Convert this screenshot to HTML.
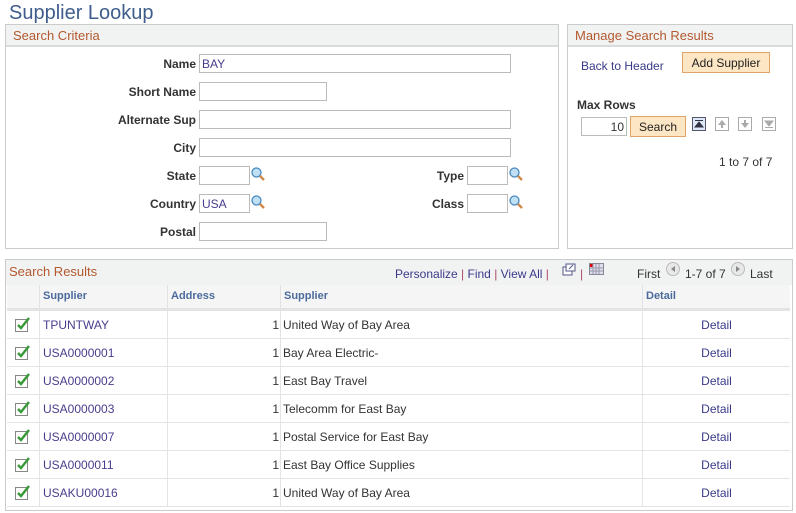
<!DOCTYPE html>
<html><head><meta charset="utf-8"><style>
*{box-sizing:border-box;margin:0;padding:0}
body{width:796px;height:513px;background:#fff;font-family:"Liberation Sans",Arial,sans-serif;font-size:12px;color:#333;position:relative;overflow:hidden}
.a{position:absolute}
.box{position:absolute;border:1px solid #cbcbcb}
.hd{position:absolute;left:0;right:0;top:0;height:22px;background:#f1f3f3;border-bottom:2px solid #d9dcdc;color:#b4582f;font-size:13px;padding:3px 0 0 7px}
.lb{position:absolute;font-weight:bold;text-align:right;color:#333;font-size:12px}
.in{position:absolute;height:19px;border:1px solid #bbb;background:#fff;font-size:12px;padding:2px 2px;color:#4a3c8c}
.lk{color:#3a3a8a}
.btn{position:absolute;background:#fde6c3;border:1px solid #e0a46a;font-size:12px;text-align:center;color:#222}
.mg{position:absolute;width:14px;height:14px}
.ic{position:absolute;width:14px;height:14px;border:1px solid #aaa;background:#fff}
.th{position:absolute;top:285px;height:26px;background:#f5f5f5;border-right:1px solid #e2e2e2;border-bottom:3px solid #e3e3e3;color:#4b6a9c;font-weight:bold;font-size:11px;padding:5px 3px}
.row{position:absolute;left:7px;width:783px;height:28px;border-bottom:1px solid #e4e4e4}
.c{position:absolute;top:0;height:27px;border-right:1px solid #e4e4e4;padding-top:7px}
</style></head><body>
<div class="a" style="left:9px;top:2px;font-size:20px;color:#3f5d8c">Supplier Lookup</div>

<div class="box" style="left:5px;top:24px;width:554px;height:225px"><div class="hd">Search Criteria</div></div>
<div class="lb" style="left:60px;width:136px;top:57px">Name</div><div class="in" style="left:199px;top:54px;width:312px">BAY</div>
<div class="lb" style="left:60px;width:136px;top:85px">Short Name</div><div class="in" style="left:199px;top:82px;width:128px"></div>
<div class="lb" style="left:60px;width:136px;top:113px">Alternate Sup</div><div class="in" style="left:199px;top:110px;width:312px"></div>
<div class="lb" style="left:60px;width:136px;top:141px">City</div><div class="in" style="left:199px;top:138px;width:312px"></div>
<div class="lb" style="left:60px;width:136px;top:169px">State</div><div class="in" style="left:199px;top:166px;width:51px"></div>
<div class="lb" style="left:60px;width:136px;top:197px">Country</div><div class="in" style="left:199px;top:194px;width:51px">USA</div>
<div class="lb" style="left:60px;width:136px;top:225px">Postal</div><div class="in" style="left:199px;top:222px;width:128px"></div>
<div class="lb" style="left:380px;width:84px;top:169px">Type</div><div class="in" style="left:467px;top:166px;width:41px"></div>
<div class="lb" style="left:380px;width:84px;top:197px">Class</div><div class="in" style="left:467px;top:194px;width:41px"></div>
<svg class="mg" style="left:251px;top:167px" viewBox="0 0 14 14"><circle cx="5.5" cy="5.5" r="4.5" fill="#bfe0f5" stroke="#4a89bf" stroke-width="1.3"/><path d="M9 9l4 4" stroke="#d08a4a" stroke-width="2.5"/></svg>
<svg class="mg" style="left:251px;top:195px" viewBox="0 0 14 14"><circle cx="5.5" cy="5.5" r="4.5" fill="#bfe0f5" stroke="#4a89bf" stroke-width="1.3"/><path d="M9 9l4 4" stroke="#d08a4a" stroke-width="2.5"/></svg>
<svg class="mg" style="left:509px;top:167px" viewBox="0 0 14 14"><circle cx="5.5" cy="5.5" r="4.5" fill="#bfe0f5" stroke="#4a89bf" stroke-width="1.3"/><path d="M9 9l4 4" stroke="#d08a4a" stroke-width="2.5"/></svg>
<svg class="mg" style="left:509px;top:195px" viewBox="0 0 14 14"><circle cx="5.5" cy="5.5" r="4.5" fill="#bfe0f5" stroke="#4a89bf" stroke-width="1.3"/><path d="M9 9l4 4" stroke="#d08a4a" stroke-width="2.5"/></svg>

<div class="box" style="left:567px;top:24px;width:226px;height:225px"><div class="hd">Manage Search Results</div></div>
<div class="a lk" style="left:581px;top:59px">Back to Header</div>
<div class="btn" style="left:682px;top:52px;width:88px;height:21px;padding-top:3px">Add Supplier</div>
<div class="lb" style="left:577px;top:98px">Max Rows</div>
<div class="in" style="left:581px;top:117px;width:46px;text-align:right;color:#333">10</div>
<div class="btn" style="left:630px;top:116px;width:56px;height:21px;padding-top:3px">Search</div>
<svg class="a" style="left:692px;top:117px" width="14" height="14" viewBox="0 0 14 14"><rect x=".5" y=".5" width="13" height="13" fill="#dde8f8" stroke="#556"/><path d="M3 3.5h8M3 10l4-5 4 5z" stroke="#334" fill="#334"/></svg>
<svg class="a" style="left:715px;top:117px" width="14" height="14" viewBox="0 0 14 14"><rect x=".5" y=".5" width="13" height="13" fill="#fff" stroke="#aaa"/><path d="M3 8l4-5 4 5zM6 8h2v3H6z" fill="#aaa"/></svg>
<svg class="a" style="left:738px;top:117px" width="14" height="14" viewBox="0 0 14 14"><rect x=".5" y=".5" width="13" height="13" fill="#fff" stroke="#aaa"/><path d="M3 6l4 5 4-5zM6 6h2V3H6z" fill="#aaa"/></svg>
<svg class="a" style="left:762px;top:117px" width="14" height="14" viewBox="0 0 14 14"><rect x=".5" y=".5" width="13" height="13" fill="#fff" stroke="#aaa"/><path d="M3 4l4 5 4-5zM3 10.5h8" stroke="#aaa" fill="#aaa"/></svg>
<div class="a" style="left:719px;top:155px">1 to 7 of 7</div>

<div class="box" style="left:5px;top:259px;width:788px;height:252px"></div>
<div class="a" style="left:6px;top:260px;width:786px;height:25px;background:#f1f3f3"></div>
<div class="a" style="left:9px;top:264px;font-size:13px;color:#b4582f">Search Results</div>
<div class="a" style="left:395px;top:267px;color:#3a3a8a">Personalize <span style="color:#b04a6a">|</span> Find <span style="color:#b04a6a">|</span> View All <span style="color:#b04a6a">|</span></div>
<svg class="a" style="left:562px;top:263px" width="14" height="13" viewBox="0 0 14 13"><rect x="1" y="4" width="9" height="8" fill="#fff" stroke="#558"/><rect x="4" y="1" width="9" height="7" fill="#fff" stroke="#558"/><path d="M7 6l4-4" stroke="#558"/></svg>
<div class="a" style="left:580px;top:267px;color:#b04a6a">|</div>
<svg class="a" style="left:589px;top:263px" width="15" height="12" viewBox="0 0 15 12"><rect x=".5" y=".5" width="14" height="11" fill="#dde" stroke="#889"/><rect x="1" y="1" width="3" height="3" fill="#d00"/><path d="M1 5h13M1 8h13M4 1v10M7 1v10M10 1v10" stroke="#99a"/></svg>
<div class="a" style="left:637px;top:267px">First</div>
<svg class="a" style="left:666px;top:262px" width="14" height="14"><circle cx="7" cy="7" r="6.5" fill="#e8e8e8" stroke="#bbb"/><path d="M9 4L5 7l4 3z" fill="#888"/></svg>
<div class="a" style="left:685px;top:267px">1-7 of 7</div>
<svg class="a" style="left:731px;top:262px" width="14" height="14"><circle cx="7" cy="7" r="6.5" fill="#e8e8e8" stroke="#bbb"/><path d="M5 4l4 3-4 3z" fill="#888"/></svg>
<div class="a" style="left:750px;top:267px">Last</div>

<div class="th" style="left:7px;width:33px"></div>
<div class="th" style="left:40px;width:128px">Supplier</div>
<div class="th" style="left:168px;width:113px">Address</div>
<div class="th" style="left:281px;width:362px">Supplier</div>
<div class="th" style="left:643px;width:147px;border-right:none">Detail</div>

<div id="rows"></div>
<script></script>
<div class="row" style="top:311px"><div class="c" style="left:0;width:33px"><svg style="margin-left:8px;margin-top:-1px" width="16" height="15"><rect x=".5" y="2.5" width="12" height="12" fill="#fff" stroke="#888"/><path d="M3 8l3 3 8-10" stroke="#3a9a3a" stroke-width="2.5" fill="none"/></svg></div><div class="c" style="left:33px;width:128px;padding-left:3px;color:#4a3c8c">TPUNTWAY</div><div class="c" style="left:161px;width:113px;text-align:right;padding-right:1px">1</div><div class="c" style="left:274px;width:362px;padding-left:2px">United Way of Bay Area</div><div class="c" style="left:636px;width:147px;border:none;text-align:center;color:#3a3a8a">Detail</div></div>
<div class="row" style="top:339px"><div class="c" style="left:0;width:33px"><svg style="margin-left:8px;margin-top:-1px" width="16" height="15"><rect x=".5" y="2.5" width="12" height="12" fill="#fff" stroke="#888"/><path d="M3 8l3 3 8-10" stroke="#3a9a3a" stroke-width="2.5" fill="none"/></svg></div><div class="c" style="left:33px;width:128px;padding-left:3px;color:#4a3c8c">USA0000001</div><div class="c" style="left:161px;width:113px;text-align:right;padding-right:1px">1</div><div class="c" style="left:274px;width:362px;padding-left:2px">Bay Area Electric-</div><div class="c" style="left:636px;width:147px;border:none;text-align:center;color:#3a3a8a">Detail</div></div>
<div class="row" style="top:367px"><div class="c" style="left:0;width:33px"><svg style="margin-left:8px;margin-top:-1px" width="16" height="15"><rect x=".5" y="2.5" width="12" height="12" fill="#fff" stroke="#888"/><path d="M3 8l3 3 8-10" stroke="#3a9a3a" stroke-width="2.5" fill="none"/></svg></div><div class="c" style="left:33px;width:128px;padding-left:3px;color:#4a3c8c">USA0000002</div><div class="c" style="left:161px;width:113px;text-align:right;padding-right:1px">1</div><div class="c" style="left:274px;width:362px;padding-left:2px">East Bay Travel</div><div class="c" style="left:636px;width:147px;border:none;text-align:center;color:#3a3a8a">Detail</div></div>
<div class="row" style="top:395px"><div class="c" style="left:0;width:33px"><svg style="margin-left:8px;margin-top:-1px" width="16" height="15"><rect x=".5" y="2.5" width="12" height="12" fill="#fff" stroke="#888"/><path d="M3 8l3 3 8-10" stroke="#3a9a3a" stroke-width="2.5" fill="none"/></svg></div><div class="c" style="left:33px;width:128px;padding-left:3px;color:#4a3c8c">USA0000003</div><div class="c" style="left:161px;width:113px;text-align:right;padding-right:1px">1</div><div class="c" style="left:274px;width:362px;padding-left:2px">Telecomm for East Bay</div><div class="c" style="left:636px;width:147px;border:none;text-align:center;color:#3a3a8a">Detail</div></div>
<div class="row" style="top:423px"><div class="c" style="left:0;width:33px"><svg style="margin-left:8px;margin-top:-1px" width="16" height="15"><rect x=".5" y="2.5" width="12" height="12" fill="#fff" stroke="#888"/><path d="M3 8l3 3 8-10" stroke="#3a9a3a" stroke-width="2.5" fill="none"/></svg></div><div class="c" style="left:33px;width:128px;padding-left:3px;color:#4a3c8c">USA0000007</div><div class="c" style="left:161px;width:113px;text-align:right;padding-right:1px">1</div><div class="c" style="left:274px;width:362px;padding-left:2px">Postal Service for East Bay</div><div class="c" style="left:636px;width:147px;border:none;text-align:center;color:#3a3a8a">Detail</div></div>
<div class="row" style="top:451px"><div class="c" style="left:0;width:33px"><svg style="margin-left:8px;margin-top:-1px" width="16" height="15"><rect x=".5" y="2.5" width="12" height="12" fill="#fff" stroke="#888"/><path d="M3 8l3 3 8-10" stroke="#3a9a3a" stroke-width="2.5" fill="none"/></svg></div><div class="c" style="left:33px;width:128px;padding-left:3px;color:#4a3c8c">USA0000011</div><div class="c" style="left:161px;width:113px;text-align:right;padding-right:1px">1</div><div class="c" style="left:274px;width:362px;padding-left:2px">East Bay Office Supplies</div><div class="c" style="left:636px;width:147px;border:none;text-align:center;color:#3a3a8a">Detail</div></div>
<div class="row" style="top:479px"><div class="c" style="left:0;width:33px"><svg style="margin-left:8px;margin-top:-1px" width="16" height="15"><rect x=".5" y="2.5" width="12" height="12" fill="#fff" stroke="#888"/><path d="M3 8l3 3 8-10" stroke="#3a9a3a" stroke-width="2.5" fill="none"/></svg></div><div class="c" style="left:33px;width:128px;padding-left:3px;color:#4a3c8c">USAKU00016</div><div class="c" style="left:161px;width:113px;text-align:right;padding-right:1px">1</div><div class="c" style="left:274px;width:362px;padding-left:2px">United Way of Bay Area</div><div class="c" style="left:636px;width:147px;border:none;text-align:center;color:#3a3a8a">Detail</div></div>
</body></html>
